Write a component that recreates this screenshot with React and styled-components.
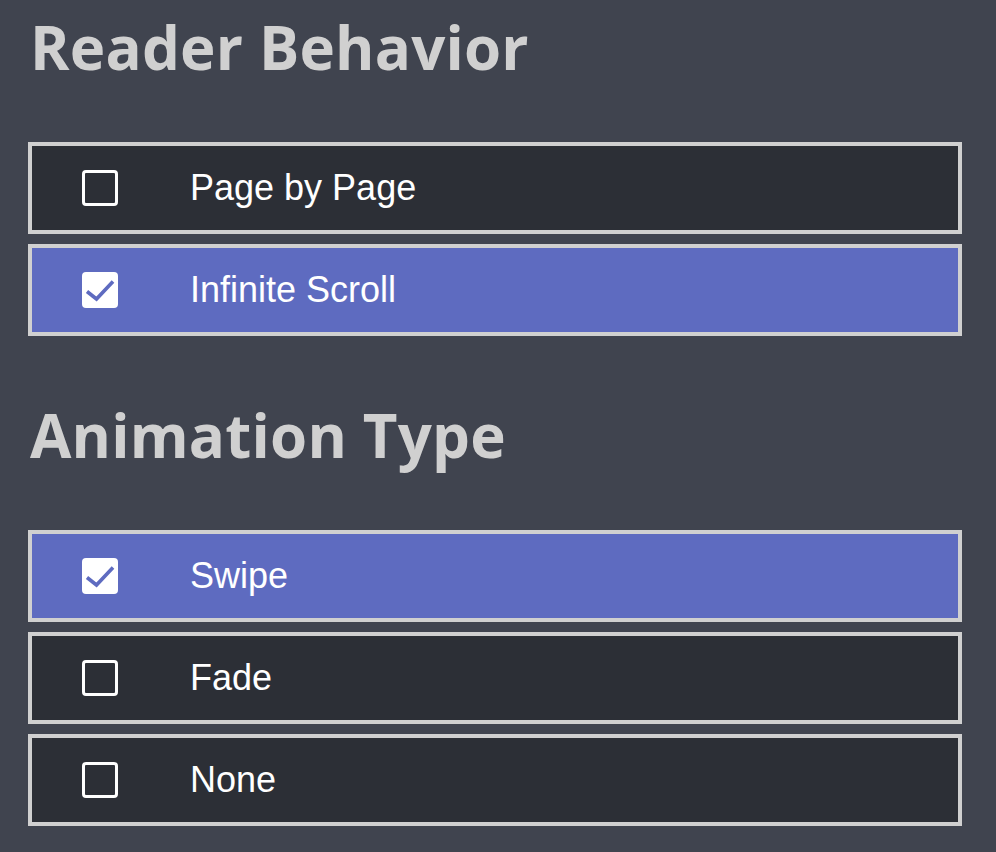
import React from "react";
import styled, { createGlobalStyle } from "styled-components";

const GlobalStyle = createGlobalStyle`
  html, body {
    margin: 0;
    padding: 0;
    background: #40444f;
  }
`;

const sections = [
  {
    title: "Reader Behavior",
    options: [
      { label: "Page by Page", checked: false },
      { label: "Infinite Scroll", checked: true },
    ],
  },
  {
    title: "Animation Type",
    options: [
      { label: "Swipe", checked: true },
      { label: "Fade", checked: false },
      { label: "None", checked: false },
    ],
  },
];

const CheckIcon = () => (
  <svg width="36" height="36" viewBox="0 0 36 36">
    <polyline
      points="5,19.5 14.5,27 31,9.5"
      fill="none"
      stroke="#5e6bc0"
      strokeWidth="3.6"
      strokeLinecap="butt"
      strokeLinejoin="miter"
    />
  </svg>
);

const App = () => {
  return (
    <Page>
      <GlobalStyle />
      {sections.map((section) => (
        <Section key={section.title}>
          <Heading>{section.title}</Heading>
          <OptionList>
            {section.options.map((opt) => (
              <Option key={opt.label} $active={opt.checked}>
                <Box $checked={opt.checked}>{opt.checked && <CheckIcon />}</Box>
                <Label>{opt.label}</Label>
              </Option>
            ))}
          </OptionList>
        </Section>
      ))}
    </Page>
  );
};

export default App;

const Page = styled.div`
  display: flex;
  flex-direction: column;
  gap: 69px;
  padding: 17px 34px 0 28px;
  min-height: 852px;
  box-sizing: border-box;
`;

const Section = styled.div`
  display: flex;
  flex-direction: column;
`;

const Heading = styled.h2`
  margin: 0 0 65px 0;
  padding-left: 2px;
  font-family: "Open Sans", sans-serif;
  font-weight: 700;
  font-size: 60px;
  letter-spacing: 0.2px;
  line-height: 1;
  color: #d0d0d0;
`;

const OptionList = styled.div`
  display: flex;
  flex-direction: column;
  gap: 10px;
`;

const Option = styled.div`
  display: flex;
  align-items: center;
  height: 92px;
  box-sizing: border-box;
  border: 4px solid #d0d0d0;
  background: ${(p) => (p.$active ? "#5e6bc0" : "#2c2f36")};
  padding-left: 50px;
`;

const Box = styled.div`
  width: 36px;
  height: 36px;
  box-sizing: border-box;
  border-radius: 4px;
  border: ${(p) => (p.$checked ? "none" : "3.5px solid #ffffff")};
  background: ${(p) => (p.$checked ? "#ffffff" : "transparent")};
  display: flex;
  flex-shrink: 0;
  margin-right: 72px;
`;

const Label = styled.span`
  font-family: "Liberation Sans", Arial, sans-serif;
  font-size: 36px;
  color: #ffffff;
`;
